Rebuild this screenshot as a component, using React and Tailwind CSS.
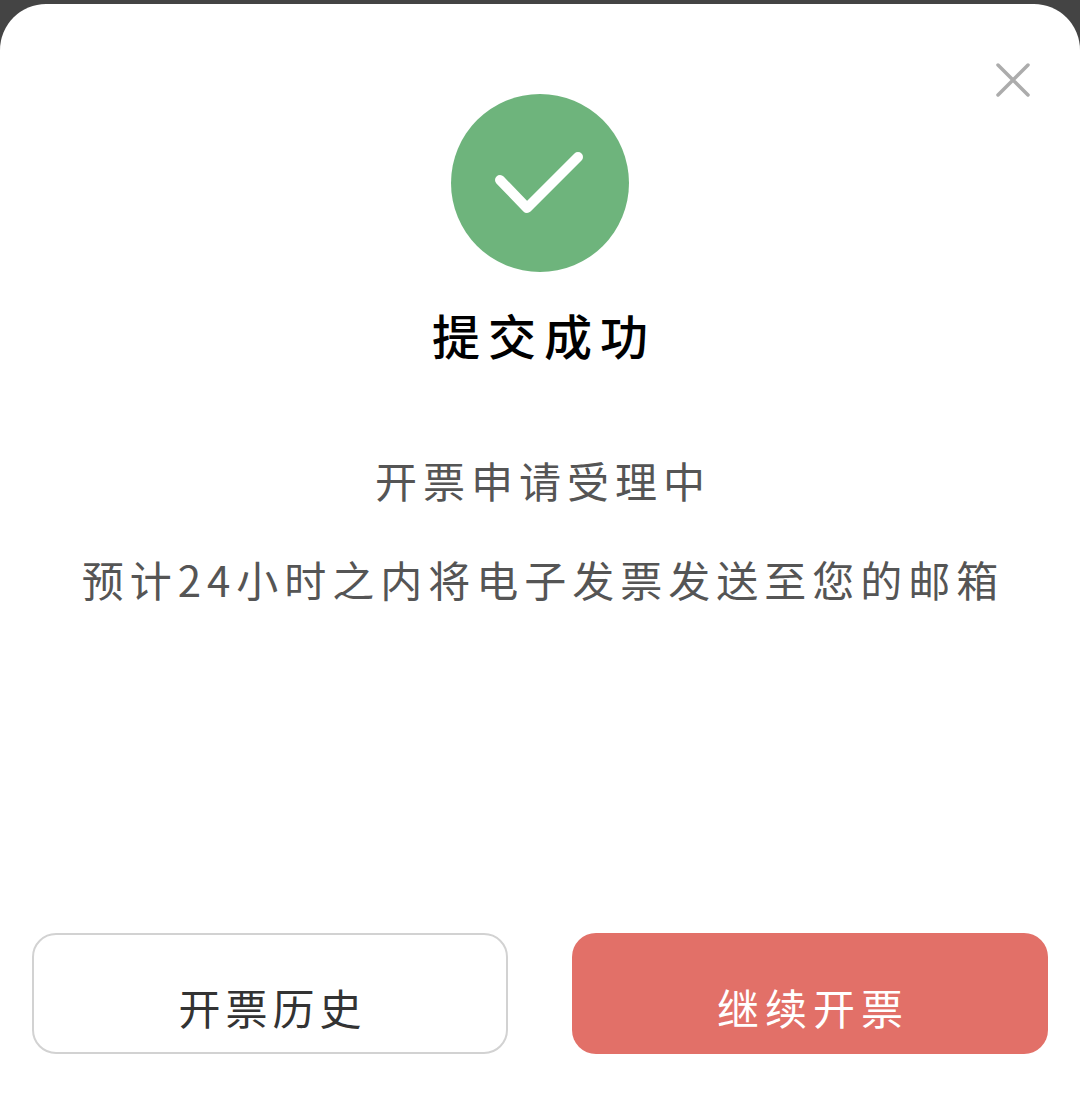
export default function App() {
  const cjk = { fontFamily: '"Noto Sans CJK SC", sans-serif' };
  return (
    <div className="w-[1080px] h-[1097px] bg-[#444444] pt-[4px] overflow-hidden" style={cjk}>
      <div className="relative h-[1093px] bg-white rounded-t-[46px] flex flex-col items-center">
        <button className="absolute right-[50px] top-[59px] w-[34px] h-[34px] text-[#acacac]">
          <svg viewBox="0 0 34 34" className="w-[34px] h-[34px]" fill="none" stroke="currentColor" strokeWidth="3.5" strokeLinecap="round">
            <path d="M2 2 L32 32 M32 2 L2 32" />
          </svg>
        </button>
        <div className="mt-[90px] w-[178px] h-[178px] rounded-full bg-[#6eb47c]">
          <svg viewBox="0 0 178 178" className="w-[178px] h-[178px]" fill="none" stroke="#ffffff" strokeWidth="10" strokeLinecap="round" strokeLinejoin="round">
            <path d="M49 86 L76 114 L127 63" />
          </svg>
        </div>
        <h1 className="mt-[30px] pl-[8px] text-[48px] leading-[64px] font-medium text-black tracking-[8px]">提交成功</h1>
        <p className="mt-[86px] pl-[6px] text-[42px] leading-[56px] text-[#555555] tracking-[6px]">开票申请受理中</p>
        <p className="mt-[43px] pl-[6px] text-[42px] leading-[56px] text-[#555555] tracking-[6px]">预计24小时之内将电子发票发送至您的邮箱</p>
        <div className="mt-auto mb-[43px] w-full px-[32px] flex justify-between">
          <button className="w-[476px] h-[121px] rounded-[24px] border-2 border-[#d2d2d2] bg-white text-[42px] text-[#333333] tracking-[5px] pl-[5px] pt-[26px]">开票历史</button>
          <button className="w-[476px] h-[121px] rounded-[24px] bg-[#e27068] text-[42px] text-white tracking-[6px] pl-[6px] pt-[26px]">继续开票</button>
        </div>
      </div>
    </div>
  );
}
